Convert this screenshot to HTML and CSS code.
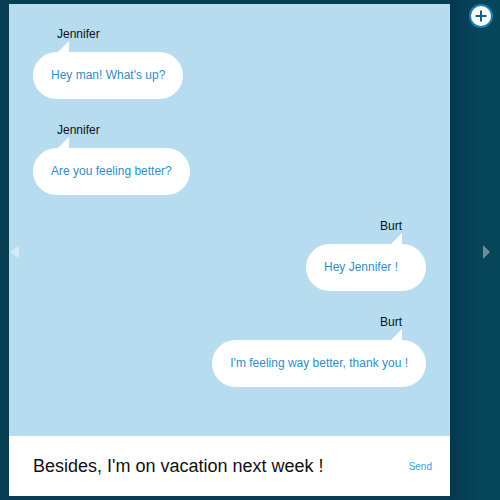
FILE: index.html
```html
<!DOCTYPE html>
<html>
<head>
<meta charset="utf-8">
<link rel="stylesheet" href="styles.css">
</head>
<body>
<div class="app">
  <div class="gutter"></div>
  <div class="chat">
    <div class="messages">
      <div class="msg left">
        <div class="name">Jennifer</div>
        <div class="tail"></div>
        <div class="bubble">Hey man! What's up?</div>
      </div>
      <div class="msg left">
        <div class="name">Jennifer</div>
        <div class="tail"></div>
        <div class="bubble">Are you feeling better?</div>
      </div>
      <div class="msg right">
        <div class="name">Burt</div>
        <div class="tail"></div>
        <div class="bubble">Hey Jennifer !</div>
      </div>
      <div class="msg right">
        <div class="name">Burt</div>
        <div class="tail"></div>
        <div class="bubble">I'm feeling way better, thank you !</div>
      </div>
      <div class="arrow-left"></div>
    </div>
    <div class="composer">
      <span class="draft">Besides, I'm on vacation next week !</span>
      <span class="send">Send</span>
    </div>
  </div>
  <div class="side">
    <div class="add">
      <svg width="14" height="14" viewBox="0 0 14 14"><path d="M7 1.5V12.5M1.5 7H12.5" stroke="#1a5d80" stroke-width="2" fill="none"/></svg>
    </div>
    <div class="arrow-right"></div>
  </div>
</div>
</body>
</html>
```
FILE: styles.css
```css
html, body {
  margin: 0;
  padding: 0;
}
body {
  background: #063d52;
  font-family: "Liberation Sans", Arial, sans-serif;
}
.app {
  display: grid;
  grid-template-columns: 9px 441px 50px;
  height: 500px;
}
.chat {
  display: flex;
  flex-direction: column;
  padding: 4px 0;
}
.messages {
  position: relative;
  flex: 1;
  background: #b8dcef;
  padding: 23px 24px 0;
  display: flex;
  flex-direction: column;
  gap: 24px;
}
.msg {
  display: flex;
  flex-direction: column;
}
.msg.left { align-items: flex-start; }
.msg.right { align-items: flex-end; }
.name {
  font-size: 12px;
  line-height: 14px;
  color: #111;
}
.msg.left .name { padding-left: 24px; }
.msg.right .name { padding-right: 24px; }
.tail {
  width: 0;
  height: 0;
  border-left: 11px solid transparent;
  border-bottom: 11px solid #fff;
}
.msg.left .tail { margin-left: 25px; }
.msg.right .tail { margin-right: 24px; }
.bubble {
  box-sizing: border-box;
  min-width: 120px;
  background: #fff;
  color: #2f8dca;
  font-size: 12px;
  line-height: 15px;
  padding: 16px 18px;
  border-radius: 24px;
}
.arrow-left {
  position: absolute;
  left: 1px;
  top: 241px;
  width: 0;
  height: 0;
  border-top: 7.5px solid transparent;
  border-bottom: 7.5px solid transparent;
  border-right: 9px solid #d6ebf6;
}
.composer {
  height: 60px;
  background: #fff;
  display: flex;
  align-items: center;
  justify-content: space-between;
  padding: 0 18px 0 24px;
}
.draft {
  font-size: 18px;
  color: #111;
}
.send {
  font-size: 10px;
  color: #3d9bd3;
}
.side {
  position: relative;
  background: linear-gradient(to right, #043850, #07455b 30px);
}
.add {
  position: absolute;
  left: 19px;
  top: 4px;
  width: 20px;
  height: 20px;
  border-radius: 50%;
  background: #fff;
  border: 2px solid #1c80b6;
  display: flex;
  align-items: center;
  justify-content: center;
}
.add svg { display: block; }
.arrow-right {
  position: absolute;
  left: 33px;
  top: 245px;
  width: 0;
  height: 0;
  border-top: 7.5px solid transparent;
  border-bottom: 7.5px solid transparent;
  border-left: 7px solid #6a8e9c;
}
```
